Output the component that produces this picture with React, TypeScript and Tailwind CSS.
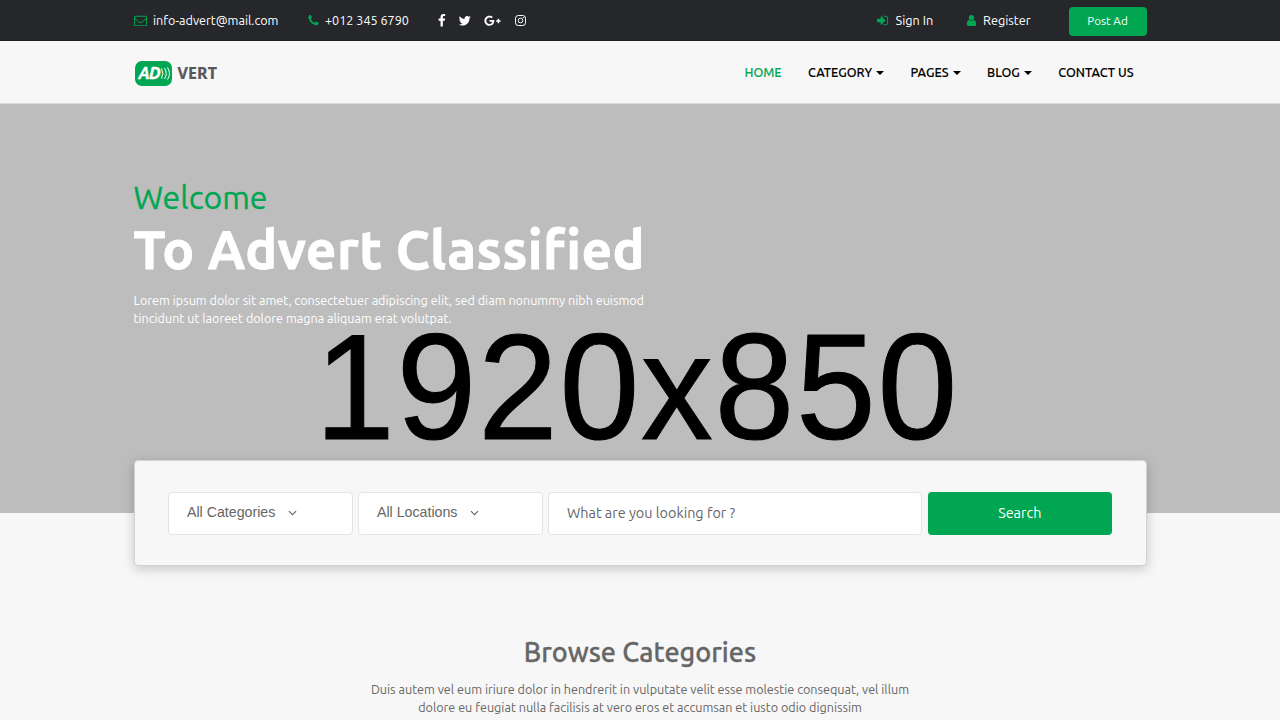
import React from 'react';

const icons = {
  envelope:
    'M1664 1504v-768q-32 36-69 66-268 206-426 338-51 43-83 67t-86.5 48.5-102.5 24.5h-2q-48 0-102.5-24.5t-86.5-48.5-83-67q-158-132-426-338-37-30-69-66v768q0 13 9.5 22.5t22.5 9.5h1472q13 0 22.5-9.5t9.5-22.5zm0-1051v-24.5l-.5-13-3-12.5-5.5-9-9-7.5-14-2.5h-1472q-13 0-22.5 9.5t-9.5 22.5q0 168 147 284 193 152 401 317 6 5 35 29.5t46 37.5 44.5 31.5 50.5 27.5 43 9h2q20 0 43-9t50.5-27.5 44.5-31.5 46-37.5 35-29.5q208-165 401-317 54-43 100.5-115.5t46.5-131.5zm128-37v1088q0 66-47 113t-113 47h-1472q-66 0-113-47t-47-113v-1088q0-66 47-113t113-47h1472q66 0 113 47t47 113z',
  phone:
    'M1600 1240q0 27-10 70.5t-21 68.5q-21 50-122 106-94 51-186 51-27 0-53-3.5t-57.5-12.5-47-14.5-55.5-20.5-49-18q-98-35-175-83-127-79-264-216t-216-264q-48-77-83-175-3-9-18-49t-20.5-55.5-14.5-47-12.5-57.5-3.5-53q0-92 51-186 56-101 106-122 25-11 68.5-21t70.5-10q14 0 21 3 18 6 53 76 11 19 30 54t35 63.5 31 53.5q3 4 17.5 25t21.5 35.5 7 28.5q0 20-28.5 50t-62 55-62 53-28.5 46q0 9 5 22.5t8.5 20.5 14 24 11.5 19q76 137 174 235t235 174q2 1 19 11.5t24 14 20.5 8.5 22.5 5q18 0 46-28.5t53-62 55-62 50-28.5q14 0 28.5 7t35.5 21.5 25 17.5q25 15 53.5 31t63.5 35 54 30q70 35 76 53 3 7 3 21z',
  signIn:
    'M1312 896q0 26-19 45l-544 544q-19 19-45 19t-45-19-19-45v-288h-448q-26 0-45-19t-19-45v-384q0-26 19-45t45-19h448v-288q0-26 19-45t45-19 45 19l544 544q19 19 19 45zm352-352v704q0 119-84.5 203.5t-203.5 84.5h-320q-13 0-22.5-9.5t-9.5-22.5q0-4-1-20t-.5-26.5 3-23.5 10-19.5 20.5-6.5h320q66 0 113-47t47-113v-704q0-66-47-113t-113-47h-312l-11.5-1-11.5-3-8-5.5-7-9-2-13.5q0-4-1-20t-.5-26.5 3-23.5 10-19.5 20.5-6.5h320q119 0 203.5 84.5t84.5 203.5z',
  user:
    'M1536 1399q0 109-62.5 187t-150.5 78h-854q-88 0-150.5-78t-62.5-187q0-85 8.5-160.5t31.5-152 58.5-131 94-89 134.5-34.5q131 128 313 128t313-128q76 0 134.5 34.5t94 89 58.5 131 31.5 152 8.5 160.5zm-256-887q0 159-112.5 271.5t-271.5 112.5-271.5-112.5-112.5-271.5 112.5-271.5 271.5-112.5 271.5 112.5 112.5 271.5z',
  facebook:
    'M1343 12v264h-157q-86 0-116 36t-30 108v189h293l-39 296h-254v759h-306v-759h-255v-296h255v-218q0-186 104-288.5t277-102.5q147 0 228 12z',
  twitter:
    'M1684 408q-67 98-162 167 1 14 1 42 0 130-38 259.5t-115.5 248.5-184.5 210.5-258 146-323 54.5q-271 0-496-145 35 4 78 4 225 0 401-138-105-2-188-64.5t-114-159.5q33 5 61 5 43 0 85-11-112-23-185.5-111.5t-73.5-205.5v-4q68 38 146 41-66-44-105-115t-39-154q0-88 44-163 121 149 294.5 238.5t371.5 99.5q-8-38-8-74 0-134 94.5-228.5t228.5-94.5q140 0 236 102 109-21 205-78-37 115-142 178 93-10 186-50z',
};

const Icon: React.FC<{ name: keyof typeof icons; className?: string }> = ({ name, className }) => (
  <svg viewBox="0 0 1792 1792" fill="currentColor" className={`shrink-0 ${className || ''}`}>
    <path d={icons[name]} />
  </svg>
);

const navItems = [
  { label: 'HOME', active: true },
  { label: 'CATEGORY', menu: true },
  { label: 'PAGES', menu: true },
  { label: 'BLOG', menu: true },
  { label: 'CONTACT US' },
];

const TopBar: React.FC = () => (
  <div className="h-[41px] bg-[#25272b] border-b border-[#1c1e22] text-white">
    <div className="w-[1013px] mx-auto flex items-start justify-between">
      <div className="flex items-center h-[41px] text-[12.6px]">
        <div className="flex items-center w-[173px]">
          <Icon name="envelope" className="size-[13px] mr-[6.5px] text-[#00a651]" />
          <span>info-advert@mail.com</span>
        </div>
        <div className="flex items-center w-[128px]">
          <Icon name="phone" className="size-[13px] mr-[5.5px] text-[#00a651]" />
          <span>+012 345 6790</span>
        </div>
        <div className="flex items-center">
          <Icon name="facebook" className="size-[13.5px]" />
          <Icon name="twitter" className="size-[13.5px] ml-[10px]" />
          {/* google plus */}
          <svg viewBox="0 0 640 512" fill="currentColor" className="w-[17px] h-[13.5px] ml-[12.5px]">
            <path d="M386.061 228.496c1.834 9.692 3.143 19.384 3.143 31.956C389.204 370.205 315.599 448 204.8 448c-106.084 0-192-85.915-192-192s85.916-192 192-192c51.864 0 95.083 18.859 128.611 50.292l-52.126 50.03c-14.145-13.621-39.028-29.599-76.485-29.599-65.484 0-118.92 54.221-118.92 121.277 0 67.056 53.436 121.277 118.92 121.277 75.961 0 104.513-54.745 108.965-82.773H204.8v-66.009h181.261zm185.406 6.437V179.2h-56.001v55.733h-55.733v56.001h55.733v55.733h56.001v-55.733H627.2v-56.001h-55.733z" />
          </svg>
          {/* instagram */}
          <svg viewBox="0 0 22 22" fill="none" stroke="currentColor" strokeWidth="2" className="size-[11px] ml-[13.5px]">
            <rect x="1" y="1" width="20" height="20" rx="5.5" />
            <circle cx="11" cy="11" r="4.6" />
            <circle cx="16.8" cy="5.2" r="1.3" fill="currentColor" stroke="none" />
          </svg>
        </div>
      </div>
      <div className="flex items-center h-[41px] text-[12.7px]">
        <div className="flex items-center w-[89px]">
          <Icon name="signIn" className="size-[13px] mr-[7px] text-[#00a651]" />
          <span>Sign In</span>
        </div>
        <div className="flex items-center w-[104px]">
          <Icon name="user" className="size-[13px] mr-[5.5px] text-[#00a651]" />
          <span>Register</span>
        </div>
        <button className="w-[78px] h-[29px] mt-px rounded-[4px] bg-[#00a651] text-[11.7px]">Post Ad</button>
      </div>
    </div>
  </div>
);

const Header: React.FC = () => (
  <header className="h-[63px] bg-[#f7f7f7] border-b border-[#dcdcdc]">
    <div className="w-[1013px] h-full mx-auto flex items-center justify-between">
      <div className="flex items-center pl-[1.5px] pt-[2px]">
        <div className="w-[37px] h-[25px] rounded-[7px] bg-[#00a651] flex items-center pl-[3.5px] text-white">
          <span className="w-[22px] font-['Ubuntu','Lato'] font-bold italic text-[16px] leading-none tracking-[-0.6px] [-webkit-text-stroke:0.5px]">
            AD
          </span>
          <svg viewBox="0 0 10 13" fill="none" stroke="currentColor" strokeWidth="1" className="w-[10px] h-[13px]">
            <path d="M.5 1.5q2.8 5 0 10M3.5 1q3.4 5.5 0 11M6.5.5q4 6 0 12" />
          </svg>
        </div>
        <span className="ml-[5.5px] font-['Noto_Sans'] font-bold text-[16px] leading-none tracking-[0.1px] text-[#58585a] [-webkit-text-stroke:0.2px]">
          VERT
        </span>
      </div>
      <nav className="flex items-center gap-[26.5px] pr-[13px] text-[12.6px] font-medium [-webkit-text-stroke:0.1px]">
        {navItems.map(item => (
          <a key={item.label} className={`flex items-center ${item.active ? 'text-[#00a651]' : 'text-black'}`}>
            {item.label}
            {item.menu && (
              <span className="ml-[4px] mt-[2px] border-x-4 border-t-4 border-x-transparent border-t-black"></span>
            )}
          </a>
        ))}
      </nav>
    </div>
  </header>
);

const Chevron: React.FC = () => (
  <svg viewBox="0 0 10 6" fill="none" stroke="currentColor" strokeWidth="1.2" className="w-[9px] h-[6px]">
    <path d="M1 .8l4 4 4-4" />
  </svg>
);

const Hero: React.FC = () => (
  <section className="relative h-[409px] bg-[#bdbdbd]">
    {/* banner placeholder */}
    <div className="absolute inset-x-0 top-[213px] pr-[6px] flex justify-center font-['Liberation_Sans'] text-[143.5px] leading-[140px] tracking-[1.7px] text-black [-webkit-text-stroke:1px]">
      <span className="scale-y-[1.045]">1920x850</span>
    </div>
    <div className="relative w-[1013px] mx-auto pt-[73px]">
      <h3 className="text-[32px] leading-[40px] text-[#00a651] [-webkit-text-stroke:0.3px]">Welcome</h3>
      <h1 className="mt-[4px] text-[53.3px] leading-[56px] tracking-[0.4px] font-bold text-white [-webkit-text-stroke:0.8px]">
        To Advert Classified
      </h1>
      <p className="mt-[14px] w-[540px] text-[12.6px] leading-[18px] text-white">
        Lorem ipsum dolor sit amet, consectetuer adipiscing elit, sed diam nonummy nibh euismod
        <br />
        tincidunt ut laoreet dolore magna aliquam erat volutpat.
      </p>
    </div>
  </section>
);

const SearchBox: React.FC = () => (
  <div className="relative w-[1013px] h-[106px] mx-auto -mt-[53px] rounded-[4px] bg-[#f7f7f7] border border-[#d2d2d2] shadow-[0_3px_12px_rgba(0,0,0,0.2)] flex items-center gap-[5.5px] px-[33.5px] text-[#666]">
    <div className="w-[184.5px] h-[43px] rounded-[4px] bg-white border border-[#e3e3e3] flex items-center gap-[13px] pl-[18px] font-['Liberation_Sans'] text-[14.2px]">
      All Categories <Chevron />
    </div>
    <div className="w-[184.5px] h-[43px] rounded-[4px] bg-white border border-[#e3e3e3] flex items-center gap-[13px] pl-[18px] font-['Liberation_Sans'] text-[14.2px]">
      All Locations <Chevron />
    </div>
    <div className="flex-1 h-[43px] rounded-[4px] bg-white border border-[#e3e3e3] flex items-center pl-[18px] pt-px text-[14.4px]">
      What are you looking for ?
    </div>
    <button className="w-[184.5px] h-[43px] pt-px rounded-[4px] bg-[#00a651] text-white text-[14.4px]">Search</button>
  </div>
);

const App: React.FC = () => {
  return (
    <div className="h-[720px] overflow-hidden bg-[#f7f7f7] font-['Ubuntu','Noto_Sans',sans-serif]">
      <TopBar />
      <Header />
      <Hero />
      <SearchBox />
      <section className="pt-[68px] text-center text-[#666]">
        <h2 className="text-[27px] leading-[36px] font-medium [-webkit-text-stroke:0.3px]">Browse Categories</h2>
        <p className="mt-[10px] text-[12.6px] leading-[18px]">
          Duis autem vel eum iriure dolor in hendrerit in vulputate velit esse molestie consequat, vel illum
          <br />
          dolore eu feugiat nulla facilisis at vero eros et accumsan et iusto odio dignissim
        </p>
      </section>
    </div>
  );
};

export default App;
